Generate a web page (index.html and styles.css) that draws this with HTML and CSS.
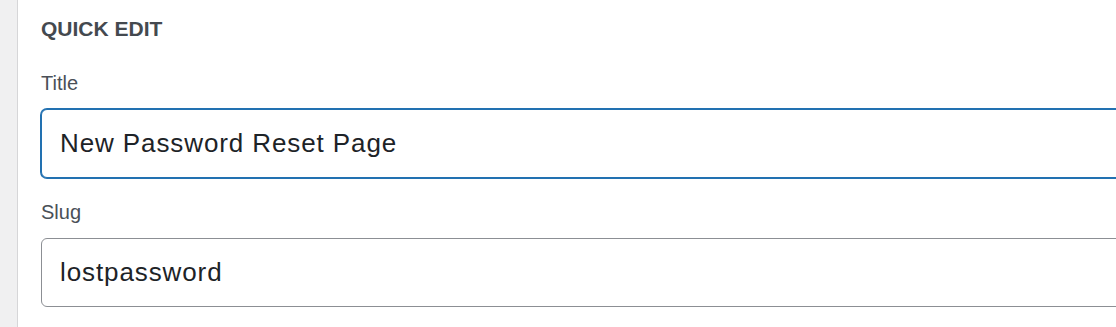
FILE: index.html
```html
<!DOCTYPE html>
<html lang="en">
<head>
<meta charset="utf-8">
<title>Quick Edit</title>
<link rel="stylesheet" href="styles.css">
</head>
<body>
<div class="layout">
  <aside class="sidebar"></aside>
  <main class="panel">
    <h2 class="legend">QUICK EDIT</h2>
    <div class="field">
      <label class="label" for="title">Title</label>
      <input class="input is-focused" id="title" type="text" value="New Password Reset Page">
    </div>
    <div class="field">
      <label class="label" for="slug">Slug</label>
      <input class="input" id="slug" type="text" value="lostpassword">
    </div>
  </main>
</div>
</body>
</html>
```
FILE: styles.css
```css
html, body {
  margin: 0;
  padding: 0;
  height: 100%;
  background: #ffffff;
  overflow: hidden;
}

.layout {
  display: flex;
  height: 100%;
  font-family: "Liberation Sans", Arial, sans-serif;
}

.sidebar {
  flex: 0 0 17px;
  background: #f0f0f1;
  border-right: 1px solid #d6d6d8;
}

.panel {
  flex: 1 1 auto;
  padding: 17px 0 0 23px;
  margin-right: -40px;
  min-width: 0;
}

.legend {
  margin: 0 0 30px;
  font-size: 21px;
  line-height: 24px;
  font-weight: 700;
  color: #44494f;
}

.field + .field {
  margin-top: 22px;
}

.label {
  display: block;
  margin: 0 0 14px;
  font-size: 20px;
  line-height: 24px;
  color: #4a5057;
}

.input {
  display: block;
  box-sizing: border-box;
  width: 100%;
  height: 69px;
  margin: 0;
  padding: 0 18px;
  border: 1px solid #8c8f94;
  border-radius: 6px;
  background: #ffffff;
  font-family: "Liberation Sans", Arial, sans-serif;
  font-size: 26px;
  letter-spacing: 0.9px;
  color: #1d2327;
  outline: none;
}

.input.is-focused {
  border-color: #2271b1;
  box-shadow: 0 0 0 1px #2271b1;
}
```
